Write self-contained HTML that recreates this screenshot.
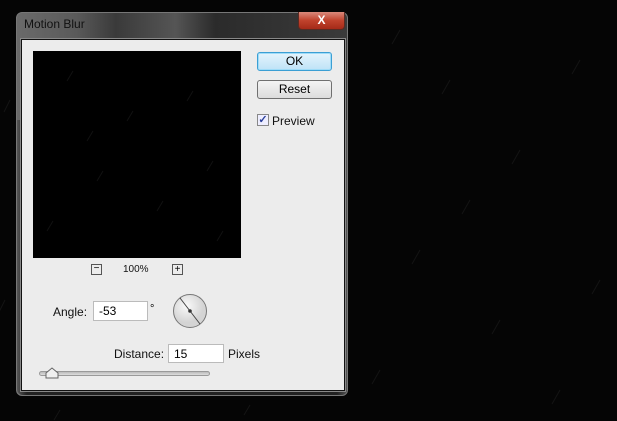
<!DOCTYPE html>
<html><head><style>
body{margin:0;width:617px;height:421px;background:#050505;overflow:hidden;font-family:"Liberation Sans",sans-serif;position:relative}
.a{position:absolute}
.frame{left:16px;top:12px;width:332px;height:384px;border:1px solid #777;border-radius:6px;background:linear-gradient(90deg,#6a6a6a 0%,#5a5a5a 18%,#3a3a3a 30%,#555 48%,#2b2b2b 60%,#3a3a3a 100%);box-sizing:border-box}
.side{left:17px;top:120px;width:330px;height:275px;background:linear-gradient(90deg,#555,#222 3%,#222 97%,#555);border-radius:0 0 6px 6px}
.inner{left:21px;top:39px;width:324px;height:352px;background:#ececec;border:1px solid #111;box-sizing:border-box;outline:1px solid #888}
.btn{width:75px;height:19px;box-sizing:border-box;border:1px solid #707070;border-radius:3px;background:linear-gradient(#f4f4f4,#dcdcdc);font-size:12px;text-align:center;line-height:17px;color:#000}
.inp{background:#fff;border:1px solid #bbb;box-sizing:border-box;font-size:12px;padding-left:5px;line-height:18px}
.t{font-size:12px;color:#111}
</style></head><body>
<svg class="a" style="left:0;top:0" width="617" height="421">
<g stroke="#141414" stroke-width="1">
<path d="M400 30l-8 14M450 80l-8 14M520 150l-8 14M580 60l-8 14M420 250l-8 14M500 320l-8 14M600 280l-8 14M380 370l-8 14M10 100l-6 12M5 300l-6 12M560 390l-8 14M470 200l-8 14M60 410l-6 10M250 405l-6 10"/>
</g></svg>
<div class="a frame"></div>
<div class="a side"></div>
<div class="a t" style="left:24px;top:17px;font-size:12px;color:#111">Motion Blur</div>
<div class="a" style="left:298px;top:12px;width:47px;height:18px;border:1px solid #5a2a22;border-top:none;border-radius:0 0 4px 4px;box-sizing:border-box;background:linear-gradient(#d98a7c,#c0422c 50%,#a52a18);color:#fff;font-weight:bold;font-size:12px;text-align:center;line-height:16px">X</div>
<div class="a inner"></div>
<div class="a" style="left:33px;top:51px;width:208px;height:207px;background:#000"></div>
<svg class="a" style="left:33px;top:51px" width="208" height="207"><g stroke="#111"><path d="M40 20l-6 10M100 60l-6 10M160 40l-6 10M70 120l-6 10M130 150l-6 10M20 170l-6 10M180 110l-6 10M190 180l-6 10M60 80l-6 10"/></g></svg>
<div class="a btn" style="left:257px;top:52px;border-color:#3c9fd4;background:linear-gradient(#e4f4fc,#bfe3f7);box-shadow:inset 0 0 0 1px #9fdcf8">OK</div>
<div class="a btn" style="left:257px;top:80px">Reset</div>
<div class="a" style="left:257px;top:114px;width:12px;height:12px;border:1px solid #888;box-sizing:border-box;background:#eef;font-size:11px;line-height:10px;color:#2a3f9a;text-align:center;font-weight:bold">✓</div>
<div class="a t" style="left:272px;top:114px">Preview</div>
<div class="a" style="left:91px;top:264px;width:11px;height:11px;border:1px solid #555;box-sizing:border-box;font-size:10px;line-height:8px;text-align:center">−</div>
<div class="a" style="left:123px;top:264px;font-size:10px;color:#111">100%</div>
<div class="a" style="left:172px;top:264px;width:11px;height:11px;border:1px solid #555;box-sizing:border-box;font-size:10px;line-height:9px;text-align:center">+</div>
<div class="a t" style="left:53px;top:305px">Angle:</div>
<div class="a inp" style="left:93px;top:301px;width:55px;height:20px">-53</div>
<div class="a" style="left:150px;top:303px;font-size:11px">°</div>
<svg class="a" style="left:172px;top:293px" width="36" height="36"><defs><radialGradient id="g" cx="40%" cy="35%"><stop offset="0" stop-color="#fafafa"/><stop offset="1" stop-color="#d4d4d4"/></radialGradient></defs><circle cx="18" cy="18" r="16.5" fill="url(#g)" stroke="#777"/><line x1="8" y1="5" x2="28" y2="31" stroke="#444"/><circle cx="18" cy="18" r="1.8" fill="#333"/></svg>
<div class="a t" style="left:114px;top:347px">Distance:</div>
<div class="a inp" style="left:168px;top:344px;width:56px;height:19px">15</div>
<div class="a t" style="left:228px;top:347px">Pixels</div>
<div class="a" style="left:39px;top:371px;width:171px;height:5px;border:1px solid #999;border-radius:3px;background:linear-gradient(#bbb,#ddd);box-sizing:border-box"></div>
<svg class="a" style="left:45px;top:367px" width="14" height="12"><path d="M1 11V6L7 1l6 5v5z" fill="#f0f0f0" stroke="#666"/></svg>
</body></html>
